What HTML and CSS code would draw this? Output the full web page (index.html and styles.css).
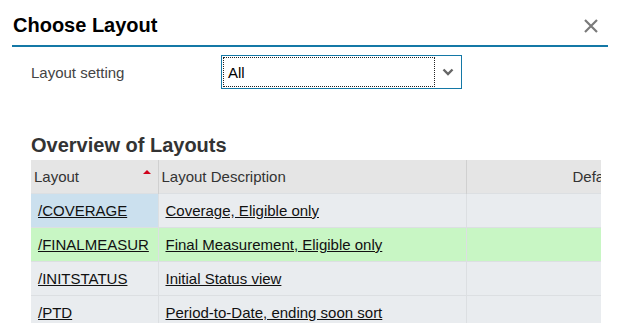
FILE: index.html
```html
<!DOCTYPE html>
<html lang="en">
<head>
  <meta charset="UTF-8">
  <title>Choose Layout</title>
  <link rel="stylesheet" href="styles.css">
</head>
<body>
  <div class="dialog">
    <div class="dialog-header">
      <h1 class="dialog-title">Choose Layout</h1>
      <button class="close-btn" aria-label="Close">
        <svg width="14" height="14" viewBox="0 0 14 14">
          <path d="M1 1 L13 13 M13 1 L1 13" stroke="#7a7a7a" stroke-width="2.2" fill="none"/>
        </svg>
      </button>
    </div>

    <div class="form-row">
      <label class="form-label">Layout setting</label>
      <div class="select-box">
        <div class="select-value">All</div>
        <div class="select-arrow">
          <svg width="12" height="8" viewBox="0 0 12 8">
            <path d="M1.5 1.5 L6 6 L10.5 1.5" stroke="#666" stroke-width="2.4" fill="none"/>
          </svg>
        </div>
      </div>
    </div>

    <h2 class="section-title">Overview of Layouts</h2>

    <div class="table-wrap">
      <table class="layouts">
        <colgroup>
          <col class="col-name">
          <col class="col-desc">
          <col class="col-default">
        </colgroup>
        <thead>
          <tr>
            <th class="sorted">Layout<span class="sort-arrow"></span></th>
            <th>Layout Description</th>
            <th class="right">Default</th>
          </tr>
        </thead>
        <tbody>
          <tr>
            <td class="selected"><a href="#">/COVERAGE</a></td>
            <td><a href="#">Coverage, Eligible only</a></td>
            <td></td>
          </tr>
          <tr class="active">
            <td><a href="#">/FINALMEASUR</a></td>
            <td><a href="#">Final Measurement, Eligible only</a></td>
            <td></td>
          </tr>
          <tr>
            <td><a href="#">/INITSTATUS</a></td>
            <td><a href="#">Initial Status view</a></td>
            <td></td>
          </tr>
          <tr>
            <td><a href="#">/PTD</a></td>
            <td><a href="#">Period-to-Date, ending soon sort</a></td>
            <td></td>
          </tr>
        </tbody>
      </table>
    </div>
  </div>
</body>
</html>
```

FILE: styles.css
```css
body {
  margin: 0;
  background: #fff;
  font-family: "Liberation Sans", Arial, sans-serif;
  color: #333;
}
.dialog {
  width: 619px;
  height: 323px;
  overflow: hidden;
}
.dialog-header {
  display: flex;
  justify-content: space-between;
  align-items: center;
  margin: 0 11px 0 12px;
  height: 45px;
  border-bottom: 2px solid #1478a6;
}
.dialog-title {
  margin: 0 0 0 1px;
  padding-top: 6px;
  font-size: 20px;
  font-weight: bold;
  color: #000;
}
.close-btn {
  border: none;
  background: none;
  padding: 0;
  margin: 6px 9px 0 0;
  width: 16px;
  height: 16px;
  display: flex;
  align-items: center;
  justify-content: center;
}
.form-row {
  display: flex;
  align-items: center;
  margin-top: 8px;
  padding-left: 31px;
}
.form-label {
  width: 190px;
  font-size: 15px;
  color: #444;
}
.select-box {
  display: flex;
  width: 239px;
  height: 32px;
  border: 1px solid #1478a6;
}
.select-value {
  flex: 1;
  margin: 1px 0 1px 1px;
  border: 1px dotted #222;
  padding-left: 4px;
  font-size: 15px;
  color: #000;
  display: flex;
  align-items: center;
}
.select-arrow {
  width: 26px;
  display: flex;
  align-items: center;
  justify-content: center;
}
.section-title {
  margin: 45px 0 0 31px;
  font-size: 20px;
  font-weight: bold;
  color: #333;
  line-height: 22px;
}
.table-wrap {
  margin: 4px 0 0 31px;
  width: 570px;
  overflow: hidden;
}
.layouts {
  border-collapse: collapse;
  table-layout: fixed;
  width: 592px;
  font-size: 15px;
}
.col-name { width: 127px; }
.col-desc { width: 308px; }
.col-default { width: 157px; }
.layouts th {
  height: 33px;
  background: #e5e5e5;
  font-weight: normal;
  text-align: left;
  padding: 0 3px;
  color: #333;
  border-left: 1px solid #d0d0d0;
  position: relative;
}
.layouts th:first-child { border-left: none; }
.layouts th.right { text-align: right; }
.sort-arrow {
  position: absolute;
  right: 7px;
  top: 10px;
  width: 0;
  height: 0;
  border-left: 4px solid transparent;
  border-right: 4px solid transparent;
  border-bottom: 4px solid #d0021b;
}
.layouts td {
  height: 33px;
  background: #e9ecef;
  border-top: 1px solid #dcdfe2;
  border-left: 1px solid #dcdfe2;
  padding: 0 7px;
  white-space: nowrap;
  overflow: hidden;
}
.layouts td:first-child { border-left: none; }
.layouts td.selected { background: #cbe0ee; }
.layouts tr.active td { background: #c8f6c4; }
.layouts a {
  color: #111;
  text-decoration: underline;
}
```
